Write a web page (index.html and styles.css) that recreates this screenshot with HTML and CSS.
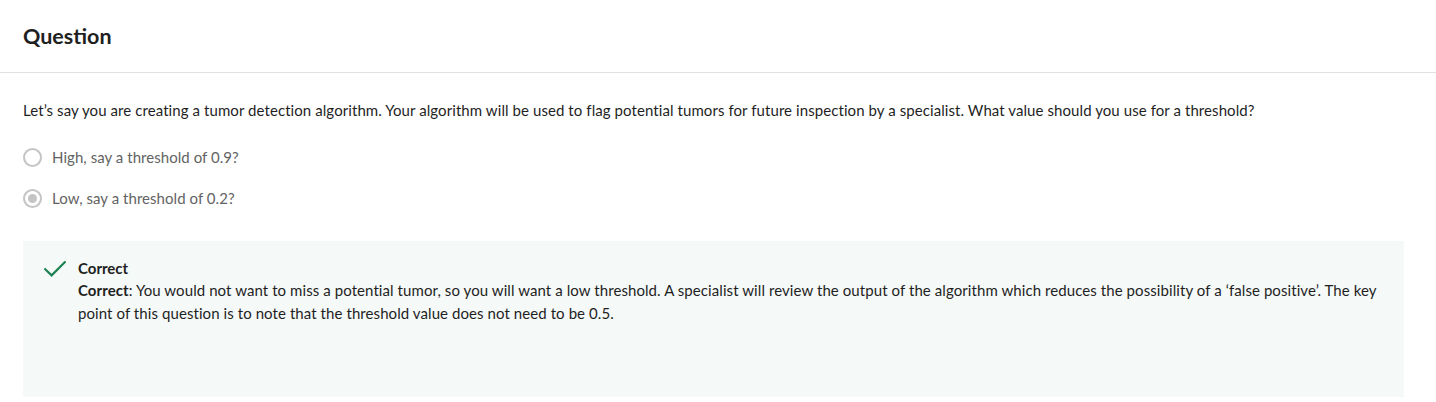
FILE: index.html
```html
<!DOCTYPE html>
<html lang="en">
<head>
<meta charset="utf-8">
<title>Question</title>
<link rel="stylesheet" href="styles.css">
</head>
<body>
<div class="page">
  <header class="header">
    <h2 class="title">Question</h2>
  </header>
  <main class="content">
    <p class="prompt">Let’s say you are creating a tumor detection algorithm. Your algorithm will be used to flag potential tumors for future inspection by a specialist. What value should you use for a threshold?</p>
    <div class="options">
      <label class="option">
        <span class="radio"></span>
        <span class="option-text">High, say a threshold of 0.9?</span>
      </label>
      <label class="option">
        <span class="radio checked"><span class="dot"></span></span>
        <span class="option-text">Low, say a threshold of 0.2?</span>
      </label>
    </div>
    <div class="feedback">
      <svg class="check" width="22" height="16" viewBox="0 0 22 16" aria-hidden="true">
        <path d="M1.2 8.2 L7.6 14.4 L20.8 1.2" fill="none" stroke="#1f8354" stroke-width="2.2" stroke-linecap="square"/>
      </svg>
      <div class="feedback-body">
        <div class="feedback-title">Correct</div>
        <p class="feedback-text"><strong>Correct</strong>: You would not want to miss a potential tumor, so you will want a low threshold. A specialist will review the output of the algorithm which reduces the possibility of a ‘false positive’. The key point of this question is to note that the threshold value does not need to be 0.5.</p>
      </div>
    </div>
  </main>
</div>
</body>
</html>
```

FILE: styles.css
```css
* { box-sizing: border-box; }
html, body { margin: 0; padding: 0; background: #fff; }
body {
  font-family: "Source Sans Pro", Lato, "Liberation Sans", sans-serif;
  color: #1f1f1f;
  font-size: 15px;
}
.page { width: 1436px; }
.header {
  height: 73px;
  padding: 0 23px;
  display: flex;
  align-items: center;
  border-bottom: 1px solid #e1e1e1;
}
.title {
  margin: 0;
  font-size: 21.5px;
  font-weight: 700;
  color: #1f1f1f;
}
.content {
  padding: 27px 32px 0 23px;
}
.prompt {
  margin: 0;
  line-height: 20px;
  font-size: 15px;
  letter-spacing: 0.08px;
  color: #1f1f1f;
}
.options {
  margin-top: 27px;
  display: flex;
  flex-direction: column;
  gap: 21px;
}
.option {
  display: flex;
  align-items: center;
  height: 20px;
}
.radio {
  width: 19px;
  height: 19px;
  border: 2px solid #c4c4c4;
  border-radius: 50%;
  margin-right: 10px;
  display: flex;
  align-items: center;
  justify-content: center;
  flex: none;
}
.radio .dot {
  width: 9px;
  height: 9px;
  border-radius: 50%;
  background: #c4c4c4;
}
.option-text {
  color: #636363;
  letter-spacing: 0.05px;
}
.feedback {
  margin-top: 33px;
  height: 156px;
  background: #f5f9f8;
  display: flex;
  padding: 17px 22px 0 21px;
}
.check {
  flex: none;
  margin-right: 12px;
  margin-top: 3px;
}
.feedback-body {
  flex: 1;
}
.feedback-title {
  font-weight: 700;
  font-size: 15px;
  line-height: 20px;
}
.feedback-text {
  margin: 1px 0 0;
  line-height: 23px;
  letter-spacing: 0.08px;
}
.feedback-text strong { font-weight: 700; }
```
